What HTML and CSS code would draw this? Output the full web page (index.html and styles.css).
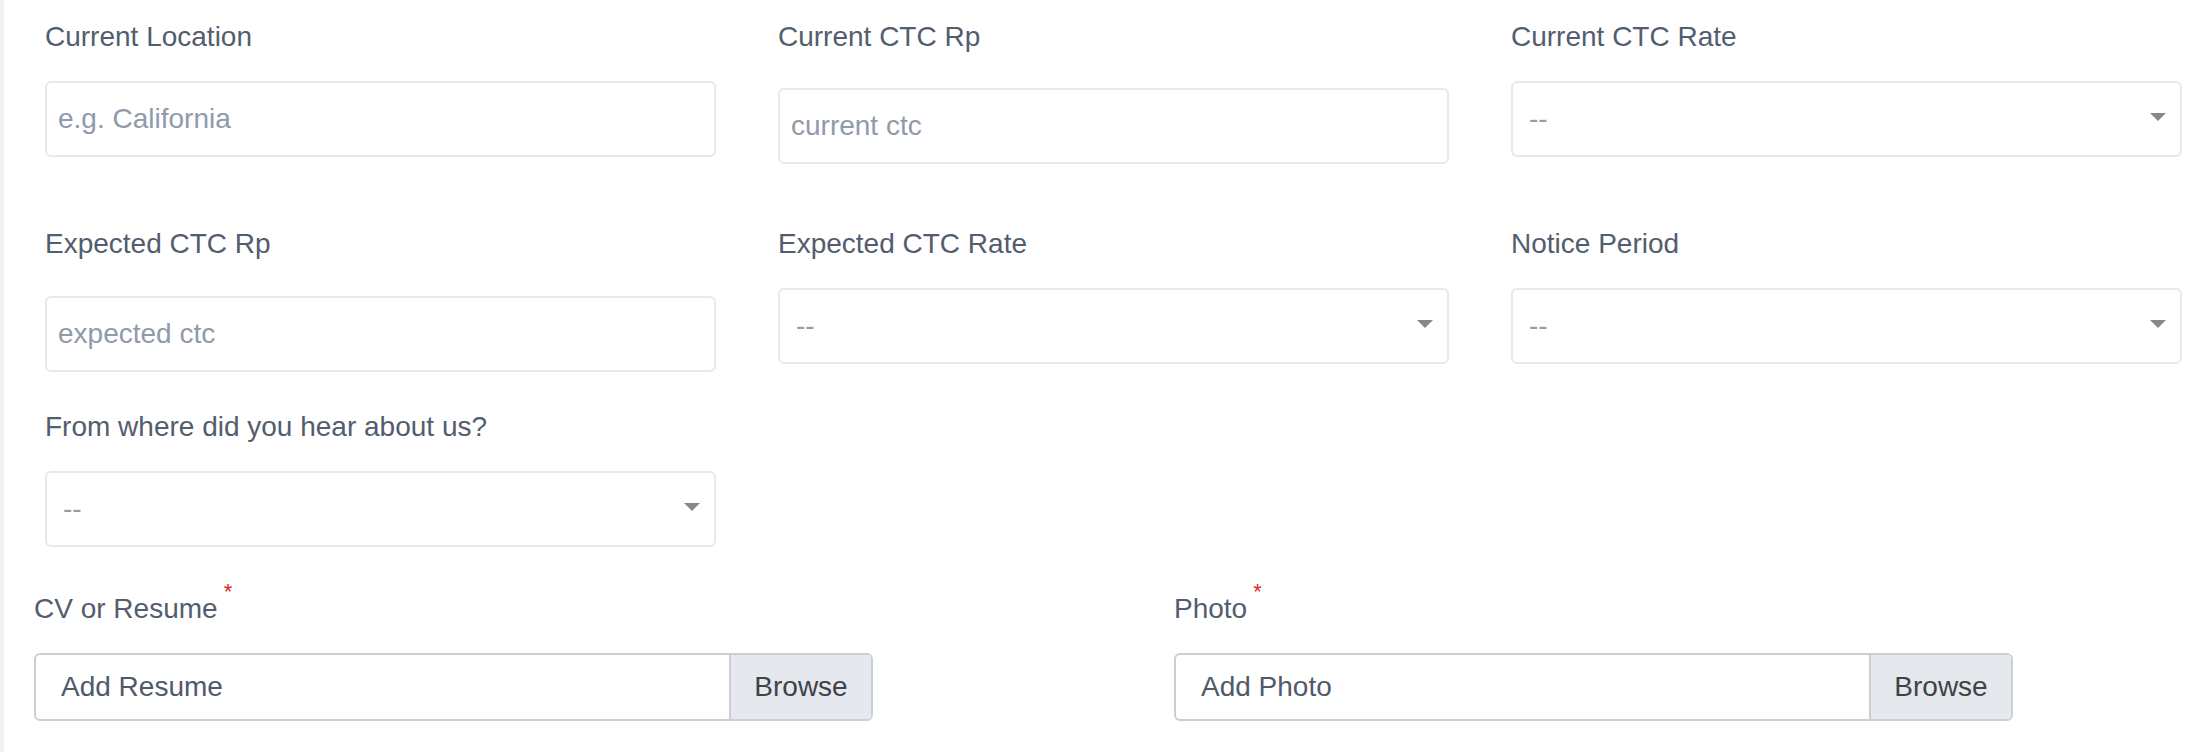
FILE: index.html
```html
<!DOCTYPE html>
<html lang="en">
<head>
<meta charset="utf-8">
<title>Application form</title>
<link rel="stylesheet" href="styles.css">
</head>
<body>
<div class="page">
  <div class="form-row row-1">
    <div class="field">
      <label class="field-label">Current Location</label>
      <input class="text-input" type="text" placeholder="e.g. California">
    </div>
    <div class="field">
      <label class="field-label">Current CTC Rp</label>
      <input class="text-input text-input--offset-sm" type="text" placeholder="current ctc">
    </div>
    <div class="field">
      <label class="field-label">Current CTC Rate</label>
      <div class="select-box">
        <span class="select-value">--</span>
        <svg class="select-arrow" width="16" height="8" viewBox="0 0 16 8"><polygon points="0,0 16,0 8,8" fill="#888888"/></svg>
      </div>
    </div>
  </div>

  <div class="form-row row-2">
    <div class="field">
      <label class="field-label">Expected CTC Rp</label>
      <input class="text-input text-input--offset" type="text" placeholder="expected ctc">
    </div>
    <div class="field">
      <label class="field-label">Expected CTC Rate</label>
      <div class="select-box">
        <span class="select-value">--</span>
        <svg class="select-arrow" width="16" height="8" viewBox="0 0 16 8"><polygon points="0,0 16,0 8,8" fill="#888888"/></svg>
      </div>
    </div>
    <div class="field">
      <label class="field-label">Notice Period</label>
      <div class="select-box">
        <span class="select-value">--</span>
        <svg class="select-arrow" width="16" height="8" viewBox="0 0 16 8"><polygon points="0,0 16,0 8,8" fill="#888888"/></svg>
      </div>
    </div>
  </div>

  <div class="form-row row-3">
    <div class="field">
      <label class="field-label">From where did you hear about us?</label>
      <div class="select-box">
        <span class="select-value">--</span>
        <svg class="select-arrow" width="16" height="8" viewBox="0 0 16 8"><polygon points="0,0 16,0 8,8" fill="#888888"/></svg>
      </div>
    </div>
  </div>

  <div class="file-row">
    <div class="file-field">
      <label class="field-label file-label">CV or Resume<span class="req">*</span></label>
      <div class="file-control">
        <span class="file-text">Add Resume</span>
        <span class="file-browse">Browse</span>
      </div>
    </div>
    <div class="file-field">
      <label class="field-label file-label">Photo<span class="req">*</span></label>
      <div class="file-control">
        <span class="file-text">Add Photo</span>
        <span class="file-browse">Browse</span>
      </div>
    </div>
  </div>
</div>
</body>
</html>
```
FILE: styles.css
```css
html, body {
  margin: 0;
  padding: 0;
  background: #ffffff;
}

body {
  font-family: "Liberation Sans", Arial, Helvetica, sans-serif;
  color: #525d6d;
}

.page {
  border-left: 4px solid #f0f1f7;
  min-height: 752px;
  box-sizing: border-box;
  padding-top: 20px;
}

.form-row {
  display: grid;
  grid-template-columns: 671px 671px 671px;
  column-gap: 62px;
  padding-left: 41px;
  align-items: start;
}

.row-1 {
  margin-bottom: 63px;
}

.row-2 {
  margin-bottom: 38px;
}

.row-3 {
  margin-bottom: 45px;
}

.field {
  display: flex;
  flex-direction: column;
}

.field-label {
  display: block;
  font-size: 28px;
  line-height: 34px;
  margin-bottom: 27px;
  color: #525d6d;
}

.text-input {
  display: block;
  box-sizing: border-box;
  width: 100%;
  height: 76px;
  margin: 0;
  padding: 0 11px;
  border: 2px solid #e5e9ef;
  border-radius: 6px;
  background: #ffffff;
  font-family: "Liberation Sans", Arial, Helvetica, sans-serif;
  font-size: 28px;
  color: #525d6d;
  outline: none;
}

.text-input::placeholder {
  color: #8f9aab;
  opacity: 1;
}

.text-input--offset-sm {
  margin-top: 7px;
}

.text-input--offset {
  margin-top: 8px;
}

.select-box {
  box-sizing: border-box;
  height: 76px;
  border: 2px solid #e5e9ef;
  border-radius: 6px;
  background: #ffffff;
  display: flex;
  align-items: center;
  justify-content: space-between;
  padding: 0 14px 0 16px;
}

.select-value {
  font-size: 28px;
  line-height: 34px;
  color: #9b9b9b;
}

.select-arrow {
  display: block;
  margin-top: -4px;
}

.file-row {
  display: grid;
  grid-template-columns: 1140px 1fr;
  padding-left: 30px;
}

.file-label {
  margin-bottom: 27px;
}

.req {
  font-size: 22px;
  line-height: 0;
  color: #e0281d;
  margin-left: 6px;
  vertical-align: 19px;
}

.file-control {
  box-sizing: border-box;
  width: 839px;
  height: 68px;
  border: 2px solid #cbcfd5;
  border-radius: 6px;
  display: flex;
  align-items: stretch;
  overflow: hidden;
  background: #ffffff;
}

.file-text {
  flex: 1;
  display: flex;
  align-items: center;
  padding-left: 25px;
  font-size: 28px;
  color: #515a69;
}

.file-browse {
  display: flex;
  align-items: center;
  justify-content: center;
  width: 142px;
  box-sizing: border-box;
  border-left: 2px solid #cbcfd5;
  background: #e5e8ec;
  font-size: 28px;
  color: #3e4249;
}
```
